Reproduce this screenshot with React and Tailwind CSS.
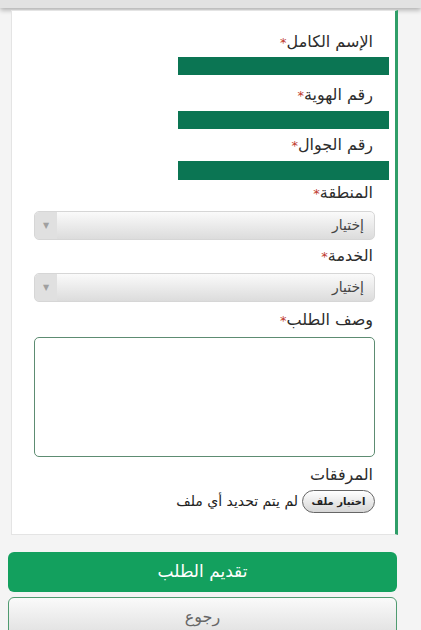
const Label = ({ text, required = true, className = "" }) => (
  <div className={`h-[18px] leading-[18px] text-[16px] text-[#2d2d2d] pr-[22px] ${className}`}>
    {text}
    {required && <span className="text-[#c0392b] text-[13px]">*</span>}
  </div>
);

const Select = ({ className = "" }) => (
  <div
    className={`h-[29px] ml-[22px] mr-[20px] flex rounded-[5px] border border-[#d6d6d6] overflow-hidden bg-gradient-to-b from-[#fafafa] to-[#dcdcdc] ${className}`}
  >
    <div className="flex-1 flex items-center pr-[10px] text-[14px] text-[#444]">إختيار</div>
    <div className="w-[22px] flex items-center justify-center bg-[#e0e0e0] text-[8px] text-[#a0a0a0]">
      ▼
    </div>
  </div>
);

const App = () => {
  return (
    <div
      dir="rtl"
      className="w-[421px] h-[630px] overflow-hidden bg-[#f4f4f4] relative"
      style={{ fontFamily: '"DejaVu Sans", "Noto Sans", sans-serif' }}
    >
      <div className="h-[8px] bg-[#e2e2e2] shadow-[0_2px_5px_rgba(0,0,0,0.3)]" />

      <div className="mt-[2px] mr-[23px] ml-[11px] bg-white border border-[#e4e4e4] border-r-[3px] border-r-[#2f9e68] pt-[22px] pb-[21px]">
        <Label text="الإسم الكامل" />
        <div className="mt-[6px] mr-[6px] w-[211px] h-[18px] bg-[#0b7553]" />

        <Label text="رقم الهوية" className="mt-[11px]" />
        <div className="mt-[7px] mr-[6px] w-[211px] h-[18px] bg-[#0b7553]" />

        <Label text="رقم الجوال" className="mt-[7px]" />
        <div className="mt-[7px] mr-[6px] w-[211px] h-[19px] bg-[#0b7553]" />

        <Label text="المنطقة" className="mt-[4px]" />
        <Select className="mt-[9px]" />

        <Label text="الخدمة" className="mt-[7px]" />
        <Select className="mt-[8px]" />

        <Label text="وصف الطلب" className="mt-[9px]" />
        <div className="mt-[8px] ml-[22px] mr-[20px] h-[120px] rounded-[5px] border border-[#5d8c72] bg-white" />

        <Label text="المرفقات" required={false} className="mt-[9px]" />
        <div className="mt-[6px] pr-[20px] flex items-center gap-[4px] h-[23px]">
          <div className="h-[23px] w-[73px] rounded-full border border-[#666] bg-gradient-to-b from-[#ffffff] to-[#d6d6d6] flex items-center justify-center text-[10px] font-bold text-[#222]">
            اختيار ملف
          </div>
          <span className="text-[14px] text-[#222]">لم يتم تحديد أي ملف</span>
        </div>
      </div>

      <div className="mt-[17px] mr-[24px] ml-[8px] h-[40px] rounded-[6px] bg-[#13a05e] flex items-center justify-center text-white text-[17px]">
        تقديم الطلب
      </div>
      <div className="mt-[5px] mr-[24px] ml-[8px] h-[40px] rounded-[6px] border border-[#4f9b70] bg-gradient-to-b from-[#fafafa] to-[#e0e0e0] flex items-center justify-center text-[#666] text-[16px]">
        رجوع
      </div>
    </div>
  );
};

export default App;
